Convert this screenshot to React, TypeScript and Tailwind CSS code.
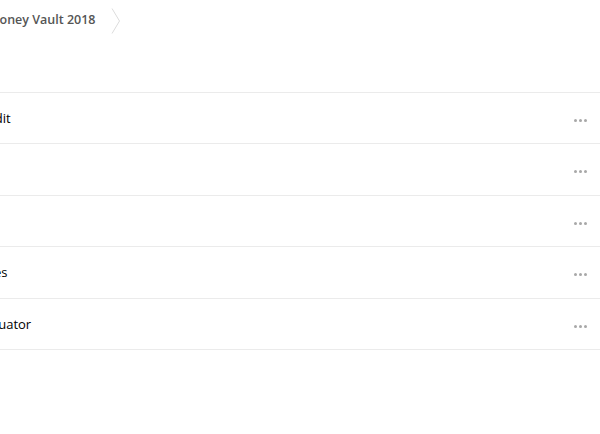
const ROWS = ['Credit', 'Tax', 'Pay', 'Rates', 'Evaluator'];

function Dots() {
  return (
    <div className="flex items-center gap-[2px] mt-[5px] pr-[13px]">
      <span className="block w-[3px] h-[3px] rounded-full bg-[#a8a8a8]" />
      <span className="block w-[3px] h-[3px] rounded-full bg-[#a8a8a8]" />
      <span className="block w-[3px] h-[3px] rounded-full bg-[#a8a8a8]" />
    </div>
  );
}

export default function App() {
  return (
    <div className="w-[600px] h-[434px] bg-white overflow-hidden font-['Open_Sans',sans-serif]">
      {/* Breadcrumb */}
      <div className="h-[40px] flex items-center -ml-[12px] pt-[1px]">
        <span className="text-[12.5px] font-semibold text-[#555]">Money Vault 2018</span>
        <svg width="10" height="26" viewBox="0 0 10 26" className="ml-[16px] mt-[1px]">
          <path d="M1 0.5 L8.5 13 L1 25.5" fill="none" stroke="#dcdcdc" strokeWidth="1" />
        </svg>
      </div>

      {/* List */}
      <div className="mt-[51.5px] border-t border-[#ebebeb]">
        {ROWS.map((name) => (
          <div
            key={name}
            className="h-[51.5px] flex items-center justify-between border-b border-[#ebebeb]"
          >
            <span className="-ml-[26px] mt-[1px] text-[13px] text-black">{name}</span>
            <Dots />
          </div>
        ))}
      </div>
    </div>
  );
}
